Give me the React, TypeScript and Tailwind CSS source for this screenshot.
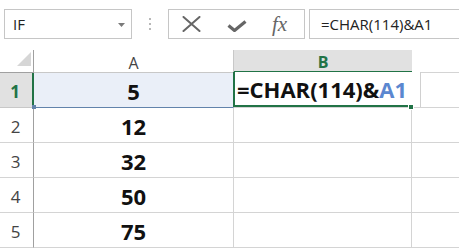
import React from "react";

const rows = [
  { n: "2", v: "12" },
  { n: "3", v: "32" },
  { n: "4", v: "50" },
  { n: "5", v: "75" },
];

const FormulaBar = () => {
  return (
    <div className="flex items-center h-[30px] mt-[9px] pl-[4px]">
      <div className="relative flex items-center w-[128px] h-[30px] border border-[#c6c6c6] pl-[8px] text-[15px] text-[#222]">
        IF
        <svg className="absolute left-[113px] top-[13px]" width="7" height="4" viewBox="0 0 7 4">
          <path d="M0 0 L7 0 L3.5 4 Z" fill="#7a7a7a" />
        </svg>
      </div>
      <div className="flex flex-col gap-[3px] ml-[17px] w-[2px]">
        <span className="w-[2px] h-[2px] bg-[#b8b8b8]" />
        <span className="w-[2px] h-[2px] bg-[#b8b8b8]" />
        <span className="w-[2px] h-[2px] bg-[#b8b8b8]" />
      </div>
      <div className="flex items-center w-[137px] h-[30px] border border-[#c6c6c6] ml-[17px]">
        <svg className="ml-[13px]" width="19" height="16" viewBox="0 0 19 16">
          <path d="M1.5 1 L17.5 15 M17.5 1 L1.5 15" stroke="#666" strokeWidth="2" strokeLinecap="round" />
        </svg>
        <svg className="ml-[26px] mt-[4px]" width="20" height="12" viewBox="0 0 20 12">
          <path d="M1.5 5.5 L7.5 10.5 L18.5 1.5" stroke="#666" strokeWidth="3.2" fill="none" strokeLinejoin="miter" />
        </svg>
        <span className="ml-[25px] font-['Liberation_Serif',serif] italic text-[21px] leading-none text-[#666]">fx</span>
      </div>
      <div className="flex items-center flex-1 h-[30px] border border-r-0 border-[#c6c6c6] ml-[4px] pl-[11px] text-[15px] text-[#222]">
        =CHAR(114)&amp;A1
      </div>
    </div>
  );
};

const Sheet = () => {
  return (
    <div className="grid grid-cols-[34px_200px_178px_1fr] mt-[11px]">
      {/* header row */}
      <div className="relative h-[23px] border-r border-b border-[#a0a0a0]">
        <svg className="absolute left-[17px] top-[2px]" width="14" height="14" viewBox="0 0 14 14">
          <path d="M14 0 L14 14 L0 14 Z" fill="#d6d6d6" />
        </svg>
      </div>
      <div className="h-[23px] flex items-center justify-center border-r border-b border-[#c8c8c8] text-[16px] text-[#444] pt-[3px]">
        A
      </div>
      <div className="h-[23px] flex items-center justify-center bg-[#e1e1e1] border-b-2 border-[#217346] text-[16px] font-bold text-[#217346] pt-[2px]">
        B
      </div>
      <div className="h-[23px] border-b border-[#d4d4d4]" />

      {/* row 1 */}
      <div className="h-[35px] flex items-center justify-center bg-[#e1e1e1] border-r-2 border-b border-r-[#217346] border-b-[#c8c8c8] text-[17px] font-bold text-[#217346] pt-[3px] pr-[2px]">
        1
      </div>
      <div className="relative h-[35px] flex items-center justify-center bg-[#eaeff8] border-r border-b border-r-[#d4d4d4] border-b-[#6283ab] text-[22px] font-bold text-[#111] pt-[3px]">
        5
        <span className="absolute left-[-2px] bottom-[-2px] w-[4px] h-[4px] bg-[#6283ab]" />
      </div>
      <div className="relative h-[35px] border-r border-b border-[#d4d4d4]">
        <div className="absolute left-[-1px] top-[-1px] w-[188px] h-[35px] bg-white border-r border-[#d0d0d0] z-10" />
        <div className="absolute left-[-1px] top-[-1px] w-[178px] h-[35px] border-l-2 border-b-2 border-[#217346] z-20 flex items-center pl-[2px] pt-[2px] text-[22px] font-bold text-[#111] whitespace-nowrap">
          =CHAR(114)&amp;<span className="text-[#5b87d0]">A1</span>
        </div>
        <span className="absolute left-[174px] bottom-[-3px] w-[6px] h-[6px] bg-[#217346] border border-white z-30" />
      </div>
      <div className="h-[35px] border-b border-[#d4d4d4]" />

      {rows.map((r) => (
        <React.Fragment key={r.n}>
          <div className="h-[35px] flex items-center justify-center border-r border-b border-r-[#a0a0a0] border-b-[#d4d4d4] text-[17px] text-[#444] pt-[4px] pr-[2px]">
            {r.n}
          </div>
          <div className="h-[35px] flex items-center justify-center border-r border-b border-[#d4d4d4] text-[22px] font-bold text-[#111] pt-[3px]">
            {r.v}
          </div>
          <div className="h-[35px] border-r border-b border-[#d4d4d4]" />
          <div className="h-[35px] border-b border-[#d4d4d4]" />
        </React.Fragment>
      ))}
    </div>
  );
};

export default function App() {
  return (
    <div className="w-[459px] h-[250px] overflow-hidden bg-white font-['Open_Sans',sans-serif]">
      <FormulaBar />
      <Sheet />
    </div>
  );
}
